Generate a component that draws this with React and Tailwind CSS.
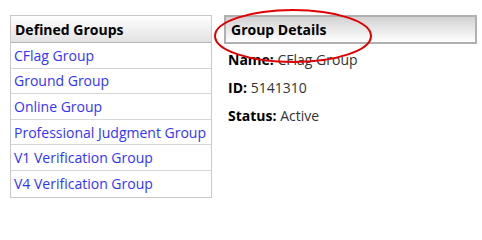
import React from "react";

const GROUPS = [
  "CFlag Group",
  "Ground Group",
  "Online Group",
  "Professional Judgment Group",
  "V1 Verification Group",
  "V4 Verification Group",
];

const DETAILS = [
  { label: "Name:", value: "CFlag Group" },
  { label: "ID:", value: "5141310" },
  { label: "Status:", value: "Active" },
];

const App = () => {
  return (
    <div
      className="relative w-[482px] h-[205px] bg-white flex items-start pt-[15px] pl-[10px] gap-[12px]"
      style={{ fontFamily: '"Open Sans", "Noto Sans", sans-serif' }}
    >
      {/* Defined groups list */}
      <div className="w-[202px] border border-[#c8c8c8]">
        <div className="h-[27px] flex items-center px-[4px] border-b border-[#b4b4b4] bg-gradient-to-b from-white to-[#e2e2e2] text-[14px] font-bold text-black">
          Defined Groups
        </div>
        {GROUPS.map((g, i) => (
          <div
            key={g}
            className={`h-[25.6px] flex items-center px-[3px] text-[14px] text-[#3333ff] ${
              i < GROUPS.length - 1 ? "border-b border-[#d6d6d6]" : ""
            }`}
          >
            {g}
          </div>
        ))}
      </div>

      {/* Group details */}
      <div className="w-[253px]">
        <div className="h-[29px] flex items-center px-[5px] border-2 border-[#b0b0b0] bg-gradient-to-b from-[#d2d2d2] to-white text-[14px] font-bold text-black">
          Group Details
        </div>
        <div className="flex flex-col gap-[10px] pt-[7px] pl-[4px] text-[14px]">
          {DETAILS.map((d) => (
            <div key={d.label} className="leading-[18px]">
              <span className="font-bold text-black">{d.label}</span>{" "}
              <span className="text-[#333333]">{d.value}</span>
            </div>
          ))}
        </div>
      </div>

      {/* Red annotation ellipse */}
      <svg
        className="absolute left-0 top-0 pointer-events-none"
        width="482"
        height="205"
        viewBox="0 0 482 205"
      >
        <ellipse cx="293" cy="36" rx="78" ry="26" fill="none" stroke="#e00000" strokeWidth="2" />
      </svg>
    </div>
  );
};

export default App;
